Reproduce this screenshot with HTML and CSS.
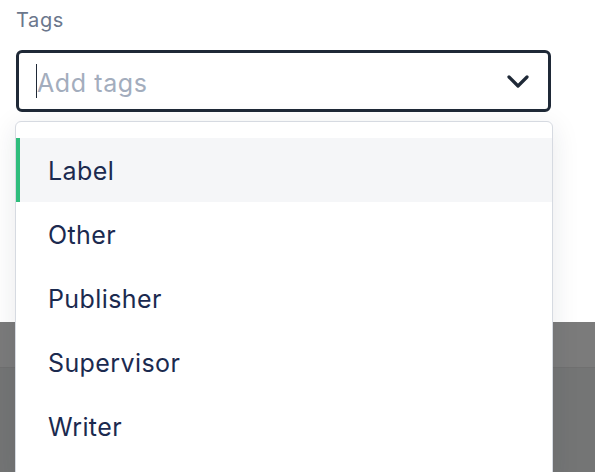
FILE: index.html
```html
<!DOCTYPE html>
<html>
<head>
<meta charset="utf-8">
<link rel="stylesheet" href="styles.css">
</head>
<body>
<div class="page">
  <div class="form">
    <div class="label">Tags</div>
    <div class="input">
      <span class="caret"></span>
      <span class="placeholder">Add tags</span>
      <svg class="chevron" width="22" height="14" viewBox="0 0 22 14">
        <path d="M2 2 L11 11 L20 2" fill="none" stroke="#1f2937" stroke-width="3.2" stroke-linecap="round" stroke-linejoin="round"/>
      </svg>
    </div>
  </div>
  <div class="band band-top"></div>
  <div class="band band-bottom"></div>

  <ul class="menu">
    <li class="item active">Label</li>
    <li class="item">Other</li>
    <li class="item">Publisher</li>
    <li class="item">Supervisor</li>
    <li class="item">Writer</li>
  </ul>
</div>
</body>
</html>
```

FILE: styles.css
```css
html, body {
  margin: 0;
  padding: 0;
  background: #ffffff;
}

.page {
  position: relative;
  width: 595px;
  height: 472px;
  overflow: hidden;
  font-family: "Inter", "Noto Sans", sans-serif;
}

.form {
  height: 322px;
  padding: 5px 44px 0 16px;
  box-sizing: border-box;
  background: #ffffff;
}

.label {
  font-size: 20px;
  line-height: 30px;
  letter-spacing: 0.6px;
  color: #6b778c;
  margin-bottom: 15px;
}

.input {
  height: 62px;
  box-sizing: border-box;
  border: 3px solid #1f2937;
  border-radius: 6px;
  display: flex;
  align-items: center;
  padding: 0 19px 0 17px;
}

.caret {
  width: 1px;
  height: 34px;
  background: #1f2937;
}

.placeholder {
  flex: 1;
  font-size: 25px;
  letter-spacing: 0.6px;
  color: #a3adbd;
  padding-top: 3px;
}

.chevron {
  display: block;
  margin-top: 2px;
}

.band {
  width: 100%;
}

.band-top {
  height: 45px;
  background: #7b7b7b;
  border-bottom: 1px solid #707070;
}

.band-bottom {
  height: 105px;
  background: #747575;
}

.menu {
  position: absolute;
  left: 15px;
  top: 121px;
  width: 538px;
  height: 360px;
  box-sizing: border-box;
  margin: 0;
  padding: 16px 0 0 0;
  list-style: none;
  background: #ffffff;
  border: 1px solid #d6dae1;
  border-radius: 6px;
  box-shadow: 0 6px 28px rgba(30, 40, 60, 0.10);
}

.item {
  height: 64px;
  display: flex;
  align-items: center;
  padding-left: 28px;
  padding-top: 1px;
  box-sizing: border-box;
  font-size: 25px;
  letter-spacing: 0.4px;
  color: #1b2a4f;
  border-left: 4px solid transparent;
}

.item.active {
  background: #f5f6f8;
  border-left-color: #2fbd7c;
}
```
